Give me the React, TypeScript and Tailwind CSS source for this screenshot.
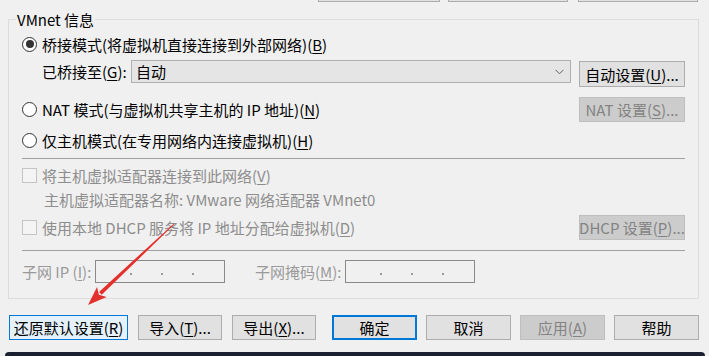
import React from "react";

function Radio({ checked }: { checked?: boolean }) {
  return (
    <span className="w-[15px] h-[15px] rounded-full border border-[#333333] bg-white flex items-center justify-center shrink-0">
      {checked && <span className="w-[8px] h-[8px] rounded-full bg-[#333333]" />}
    </span>
  );
}

function Check() {
  return <span className="w-[15px] h-[15px] border border-[#c4c4c4] bg-[#f4f4f4] shrink-0" />;
}

function U({ c }: { c: string }) {
  return <span className="underline underline-offset-2">{c}</span>;
}

function Btn({
  children,
  w,
  kind = "normal",
  className = "",
}: {
  children: React.ReactNode;
  w: string;
  kind?: "normal" | "hover" | "default" | "disabled";
  className?: string;
}) {
  const k =
    kind === "hover"
      ? "border border-[#0078d7] bg-[#e5f1fb] text-[#000]"
      : kind === "default"
      ? "border-2 border-[#0078d7] bg-[#e1e1e1] text-[#000]"
      : kind === "disabled"
      ? "border border-[#bfbfbf] bg-[#cccccc] text-[#838383]"
      : "border border-[#adadad] bg-[#e1e1e1] text-[#000]";
  return (
    <div className={`${w} h-[25px] flex items-center justify-center shrink-0 whitespace-nowrap leading-none ${k} ${className}`}>
      {children}
    </div>
  );
}

function IpBox() {
  return (
    <div className="w-[130px] h-[23px] border border-[#8a8a8a] flex items-center pl-[34px] gap-[29px]">
      <span className="w-[2px] h-[2px] bg-[#9a9a9a] mt-[5px]" />
      <span className="w-[2px] h-[2px] bg-[#9a9a9a] mt-[5px]" />
      <span className="w-[2px] h-[2px] bg-[#9a9a9a] mt-[5px]" />
    </div>
  );
}

export default function App() {
  // arrow geometry
  const sx = 174, sy = 224, tx = 88, ty = 305;
  const dx = tx - sx, dy = ty - sy;
  const len = Math.hypot(dx, dy);
  const ux = dx / len, uy = dy / len;
  const px = -uy, py = ux;
  const hl = 19, hw = 7;
  const bx = tx - ux * hl, by = ty - uy * hl;
  const w0 = 0.5, w1 = 2;
  const shaft = [
    [sx + px * w0, sy + py * w0],
    [bx + ux * 2 + px * w1, by + uy * 2 + py * w1],
    [bx + ux * 2 - px * w1, by + uy * 2 - py * w1],
    [sx - px * w0, sy - py * w0],
  ]
    .map((p) => p.join(","))
    .join(" ");
  const head = [
    [tx, ty],
    [bx + px * hw, by + py * hw],
    [bx + ux * 4, by + uy * 4],
    [bx - px * hw, by - py * hw],
  ]
    .map((p) => p.join(","))
    .join(" ");

  return (
    <div className="relative w-[709px] h-[356px] overflow-hidden bg-[#f0f0f0] text-[15px] text-black font-['Noto_Sans_CJK_SC','Noto_Sans',sans-serif] flex flex-col">
      {/* bottoms of buttons above */}
      <div className="flex h-[2px] shrink-0">
        <div className="ml-[318px] w-[122px] border-x border-b border-[#adadad] bg-[#e1e1e1]" />
        <div className="ml-[8px] w-[120px] border-x border-b border-[#adadad] bg-[#e1e1e1]" />
        <div className="ml-[10px] w-[120px] border-x border-b border-[#adadad] bg-[#e1e1e1]" />
      </div>

      {/* group box */}
      <div className="relative ml-[8px] mt-[17px] w-[691px] border border-[#dcdcdc] pl-[13px] pr-[13px] pt-[13px] pb-[15px] flex flex-col">
        <span className="absolute left-[7px] top-[-10px] px-[1px] bg-[#f0f0f0] leading-[20px]">VMnet 信息</span>

        {/* bridged */}
        <div className="h-[22px] flex items-center gap-[5px] leading-none">
          <Radio checked />
          <span>
            桥接模式(将虚拟机直接连接到外部网络)(<U c="B" />)
          </span>
        </div>

        <div className="mt-[5px] h-[27px] flex items-start leading-none">
          <span className="ml-[20px] w-[89px] h-[23px] flex items-center">
            已桥接至(<U c="G" />):
          </span>
          <div className="w-[440px] h-[23px] border border-[#b0b0b0] bg-[#e5e5e5] flex items-center pl-[4px] pr-[6px]">
            <span className="flex-1">自动</span>
            <svg width="9" height="6" viewBox="0 0 9 6" className="mt-[1px]">
              <path d="M0.5 0.8 L4.5 4.8 L8.5 0.8" fill="none" stroke="#606060" strokeWidth="1" />
            </svg>
          </div>
          <Btn w="w-[106px]" className="ml-auto mt-[1px] h-[26px]">
            自动设置(<U c="U" />)...
          </Btn>
        </div>

        {/* NAT */}
        <div className="mt-[10px] h-[25px] flex items-center gap-[5px] leading-none">
          <Radio />
          <span>
            NAT 模式(与虚拟机共享主机的 IP 地址)(<U c="N" />)
          </span>
          <Btn w="w-[106px]" kind="disabled" className="ml-auto">
            NAT 设置(<U c="S" />)...
          </Btn>
        </div>

        {/* host only */}
        <div className="mt-[7px] h-[22px] flex items-center gap-[5px] leading-none">
          <Radio />
          <span>
            仅主机模式(在专用网络内连接虚拟机)(<U c="H" />)
          </span>
        </div>

        <div className="mt-[7px] h-[1px] bg-[#a0a0a0]" />

        <div className="mt-[5px] h-[22px] flex items-center gap-[5px] leading-none text-[#8d8d8d]">
          <Check />
          <span>
            将主机虚拟适配器连接到此网络(<U c="V" />)
          </span>
        </div>

        <div className="mt-[2px] h-[22px] flex items-center leading-none text-[#8d8d8d] pl-[22px]">
          主机虚拟适配器名称: VMware 网络适配器 VMnet0
        </div>

        <div className="mt-[5px] h-[25px] flex items-center gap-[5px] leading-none text-[#8d8d8d]">
          <Check />
          <span>
            使用本地 DHCP 服务将 IP 地址分配给虚拟机(<U c="D" />)
          </span>
          <Btn w="w-[106px]" kind="disabled" className="ml-auto">
            DHCP 设置(<U c="P" />)...
          </Btn>
        </div>

        <div className="mt-[10px] h-[1px] bg-[#a0a0a0]" />

        <div className="mt-[9px] h-[23px] flex items-center leading-none text-[#9a9a9a]">
          <span className="w-[73px]">
            子网 IP (<U c="I" />):
          </span>
          <IpBox />
          <span className="ml-[30px] w-[90px]">
            子网掩码(<U c="M" />):
          </span>
          <IpBox />
        </div>
      </div>

      {/* bottom buttons */}
      <div className="mt-[16px] flex h-[25px] shrink-0">
        <Btn w="w-[119px]" kind="hover" className="ml-[9px]">
          还原默认设置(<U c="R" />)
        </Btn>
        <Btn w="w-[84px]" className="ml-[10px]">
          导入(<U c="T" />)...
        </Btn>
        <Btn w="w-[84px]" className="ml-[10px]">
          导出(<U c="X" />)...
        </Btn>
        <Btn w="w-[85px]" kind="default" className="ml-[16px]">
          确定
        </Btn>
        <Btn w="w-[85px]" className="ml-[9px]">
          取消
        </Btn>
        <Btn w="w-[85px]" kind="disabled" className="ml-[9px]">
          应用(<U c="A" />)
        </Btn>
        <Btn w="w-[85px]" className="ml-[9px]">
          帮助
        </Btn>
      </div>

      <div className="mt-[12px] ml-[5px] mr-[4px] h-[4px] shrink-0 rounded-t-[5px] bg-[#1c2131]" />

      {/* red annotation arrow */}
      <svg className="absolute left-0 top-0 pointer-events-none" width="709" height="356" viewBox="0 0 709 356">
        <polygon points={shaft} fill="#e4302c" />
        <polygon points={head} fill="#e4302c" />
      </svg>
    </div>
  );
}
